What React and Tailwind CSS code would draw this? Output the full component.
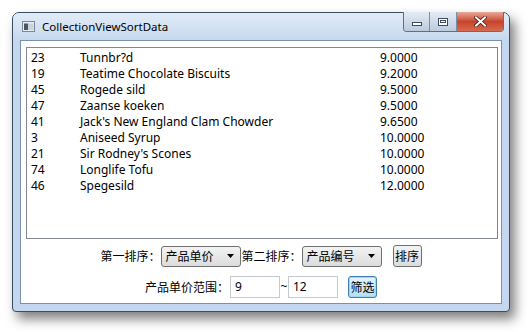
import React from "react";

const products = [
    { id: 23, name: "Tunnbr?d", price: "9.0000" },
    { id: 19, name: "Teatime Chocolate Biscuits", price: "9.2000" },
    { id: 45, name: "Rogede sild", price: "9.5000" },
    { id: 47, name: "Zaanse koeken", price: "9.5000" },
    { id: 41, name: "Jack's New England Clam Chowder", price: "9.6500" },
    { id: 3, name: "Aniseed Syrup", price: "10.0000" },
    { id: 21, name: "Sir Rodney's Scones", price: "10.0000" },
    { id: 74, name: "Longlife Tofu", price: "10.0000" },
    { id: 46, name: "Spegesild", price: "12.0000" },
];

const cjk = "font-['Noto_Sans_CJK_SC',sans-serif]";

function ComboBox({ value }) {
    return (
        <div className="w-[80px] h-[21px] flex items-center justify-between pl-[4px] pr-[6px] border border-[#707070] rounded-[3px] bg-linear-to-b from-[#f3f3f3] to-[#dcdcdc]">
            <span className={`${cjk} text-[12px] leading-none text-black`}>{value}</span>
            <svg width="7" height="4" viewBox="0 0 7 4">
                <path d="M0 0 H7 L3.5 4 Z" fill="#000" />
            </svg>
        </div>
    );
}

function TitleButtons() {
    return (
        <div className="flex h-[20px] -mt-px rounded-b-[4px] border border-t-0 border-[#5a6f8c] overflow-hidden">
            <div className="w-[26px] flex items-center justify-center bg-linear-to-b from-[#e4ebf4] to-[#bccbdd] border-r border-[#7b8ea8]">
                <div className="w-[10px] h-[4px] border border-[#3d4c60] bg-white mt-[4px]" />
            </div>
            <div className="w-[27px] flex items-center justify-center bg-linear-to-b from-[#e4ebf4] to-[#bccbdd] border-r border-[#7b8ea8]">
                <div className="w-[10px] h-[8px] border border-[#3d4c60] bg-white flex items-center justify-center">
                    <div className="w-[6px] h-[3px] border border-[#3d4c60]" />
                </div>
            </div>
            <div className="w-[46px] flex items-center justify-center bg-linear-to-b from-[#e9a99a] via-[#c7442c] to-[#d8694f]">
                <svg width="13" height="11" viewBox="0 0 13 11">
                    <path d="M2 1.5 L11 9.5 M11 1.5 L2 9.5" stroke="#5a1a10" strokeWidth="3.6" strokeLinecap="square" />
                    <path d="M2 1.5 L11 9.5 M11 1.5 L2 9.5" stroke="#ffffff" strokeWidth="2" strokeLinecap="square" />
                </svg>
            </div>
        </div>
    );
}

export default function App() {
    return (
        <div className="w-[532px] h-[332px] bg-white pt-[12px] pl-[12px] font-['Noto_Sans',sans-serif]">
            <div className="w-[498px] h-[300px] flex flex-col rounded-t-[7px] rounded-b-[4px] border border-[#3b4d63] bg-[#c4d7ee] shadow-[5px_7px_12px_rgba(0,0,0,0.5)]">
                {/* title bar */}
                <div className="h-[27px] flex items-start justify-between pl-[9px] pr-[5px] rounded-t-[6px] bg-linear-to-b from-[#e2ecf8] to-[#c6d8ee]">
                    <div className="flex items-center gap-[7px] h-full">
                        <svg width="13" height="11" viewBox="0 0 13 11">
                            <rect x="0.5" y="0.5" width="12" height="10" fill="#e8edf2" stroke="#7d8794" />
                            <rect x="2" y="2.5" width="4" height="6.5" fill="#3f5a66" />
                            <rect x="6" y="2.5" width="5.5" height="6.5" fill="#c9d3dc" />
                        </svg>
                        <span className="text-[11.5px] text-black leading-none">CollectionViewSortData</span>
                    </div>
                    <TitleButtons />
                </div>

                {/* client area */}
                <div className="flex-1 mx-[7px] mb-[7px] border border-[#7b90aa] bg-white flex flex-col">
                    <div className="h-[192px] ml-[5px] mr-[3px] mt-[6px] border border-[#828790] pt-[2px] pl-[4px]">
                        {products.map((p) => (
                            <div key={p.id} className="flex h-[16px] items-center text-[12px] text-black leading-none">
                                <span className="w-[49px]">{p.id}</span>
                                <span className="w-[300px]">{p.name}</span>
                                <span>{p.price}</span>
                            </div>
                        ))}
                    </div>

                    <div className="mt-[6px] flex items-center justify-center">
                        <span className={`${cjk} text-[12px] text-black`}>第一排序：</span>
                        <ComboBox value="产品单价" />
                        <span className={`${cjk} text-[12px] text-black ml-px`}>第二排序：</span>
                        <ComboBox value="产品编号" />
                        <div className={`${cjk} ml-[11px] w-[29px] h-[22px] flex items-center justify-center border border-[#707070] rounded-[3px] bg-linear-to-b from-[#f3f3f3] to-[#dcdcdc] text-[12px] text-black`}>
                            排序
                        </div>
                    </div>

                    <div className="mt-[9px] flex items-center justify-center">
                        <span className={`${cjk} text-[12px] text-black`}>产品单价范围：</span>
                        <div className="ml-px w-[50px] h-[22px] border border-[#c5c9d0] flex items-center pl-[4px] text-[12px] text-black">9</div>
                        <span className="w-[8px] text-center text-[12px] text-black">~</span>
                        <div className="w-[50px] h-[22px] border border-[#c5c9d0] flex items-center pl-[4px] text-[12px] text-black">12</div>
                        <div className={`${cjk} ml-[10px] w-[29px] h-[22px] flex items-center justify-center border border-[#3c7fb1] rounded-[3px] bg-linear-to-b from-[#e6f5fc] to-[#b4def4] shadow-[inset_0_0_0_1px_#9fd8f4] text-[12px] text-black`}>
                            筛选
                        </div>
                    </div>
                </div>
            </div>
        </div>
    );
}
